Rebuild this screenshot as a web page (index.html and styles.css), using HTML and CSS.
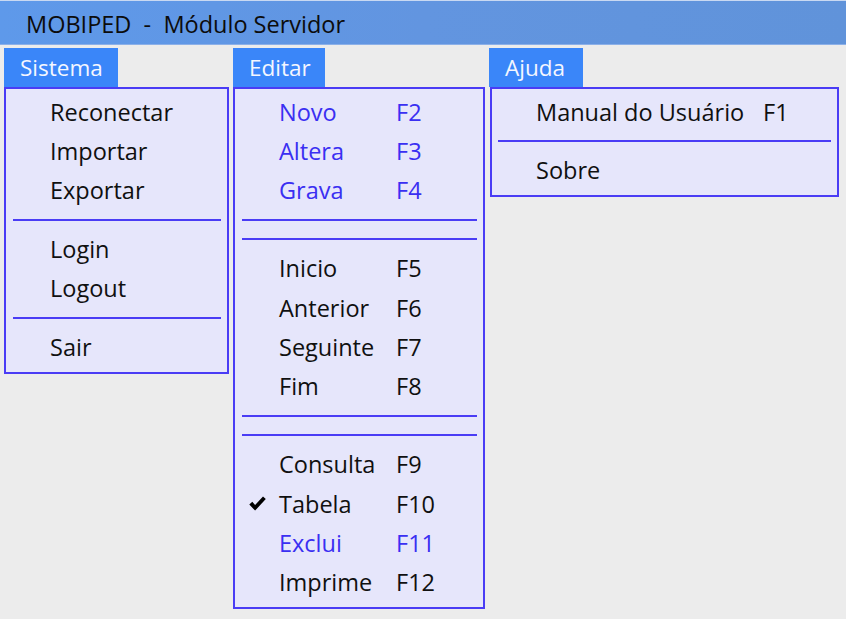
FILE: index.html
```html
<!DOCTYPE html>
<html lang="pt">
<head>
<meta charset="utf-8">
<title>MOBIPED - Módulo Servidor</title>
<link rel="stylesheet" href="styles.css">
</head>
<body>
<div class="window">
  <div class="titlebar">MOBIPED&nbsp; - &nbsp;Módulo Servidor</div>
  <div class="menus">
    <div class="col col-sistema">
      <div class="tab">Sistema</div>
      <div class="panel">
        <div class="item"><span class="chk"></span><span class="lbl">Reconectar</span></div>
        <div class="item"><span class="chk"></span><span class="lbl">Importar</span></div>
        <div class="item"><span class="chk"></span><span class="lbl">Exportar</span></div>
        <div class="sep"></div>
        <div class="item"><span class="chk"></span><span class="lbl">Login</span></div>
        <div class="item"><span class="chk"></span><span class="lbl">Logout</span></div>
        <div class="sep"></div>
        <div class="item"><span class="chk"></span><span class="lbl">Sair</span></div>
      </div>
    </div>
    <div class="col col-editar">
      <div class="tab">Editar</div>
      <div class="panel">
        <div class="item disabled"><span class="chk"></span><span class="lbl">Novo</span><span class="key">F2</span></div>
        <div class="item disabled"><span class="chk"></span><span class="lbl">Altera</span><span class="key">F3</span></div>
        <div class="item disabled"><span class="chk"></span><span class="lbl">Grava</span><span class="key">F4</span></div>
        <div class="sep"></div>
        <div class="sep"></div>
        <div class="item"><span class="chk"></span><span class="lbl">Inicio</span><span class="key">F5</span></div>
        <div class="item"><span class="chk"></span><span class="lbl">Anterior</span><span class="key">F6</span></div>
        <div class="item"><span class="chk"></span><span class="lbl">Seguinte</span><span class="key">F7</span></div>
        <div class="item"><span class="chk"></span><span class="lbl">Fim</span><span class="key">F8</span></div>
        <div class="sep"></div>
        <div class="sep"></div>
        <div class="item"><span class="chk"></span><span class="lbl">Consulta</span><span class="key">F9</span></div>
        <div class="item"><span class="chk"><svg class="check" width="17" height="16" viewBox="0 0 17 16"><path d="M0.3 8.6 L3.3 5.8 L6.1 8.9 L14 0.4 L16.8 3 L6.1 14.6 Z" fill="#000"/></svg></span><span class="lbl">Tabela</span><span class="key">F10</span></div>
        <div class="item disabled"><span class="chk"></span><span class="lbl">Exclui</span><span class="key">F11</span></div>
        <div class="item"><span class="chk"></span><span class="lbl">Imprime</span><span class="key">F12</span></div>
      </div>
    </div>
    <div class="col col-ajuda">
      <div class="tab">Ajuda</div>
      <div class="panel">
        <div class="item"><span class="chk"></span><span class="lbl">Manual do Usuário</span><span class="key">F1</span></div>
        <div class="sep sep-short"></div>
        <div class="item"><span class="chk"></span><span class="lbl">Sobre</span></div>
      </div>
    </div>
  </div>
</div>
</body>
</html>
```
FILE: styles.css
```css
html, body {
  margin: 0;
  padding: 0;
}
body {
  background: #ececec;
  font-family: "Open Sans", "Noto Sans", "DejaVu Sans", sans-serif;
  width: 846px;
  height: 619px;
  overflow: hidden;
}
.titlebar {
  height: 43px;
  border-top: 1px solid #c9d9f2;
  border-bottom: 1px solid #8cb0e8;
  background: linear-gradient(90deg, #5e99ea 0%, #6295e0 50%, #6093da 100%);
  color: #0c0c0c;
  font-size: 23.5px;
  line-height: 47px;
  padding-left: 26px;
  white-space: pre;
  overflow: hidden;
}
.menus {
  display: flex;
  padding: 3px 0 0 4px;
  gap: 4px;
  align-items: flex-start;
}
.col {
  display: flex;
  flex-direction: column;
  align-items: flex-start;
}
.col-sistema { width: 225px; }
.col-editar { width: 252px; }
.col-ajuda { width: 350px; }
.tab {
  height: 39px;
  line-height: 39px;
  background: #3a86f9;
  color: #f4f6ff;
  font-size: 22.5px;
  padding-left: 16px;
  box-sizing: border-box;
  overflow: hidden;
}
.col-sistema .tab { width: 114px; }
.col-editar .tab { width: 92px; }
.col-ajuda .tab { width: 94px; }
.panel {
  align-self: stretch;
  background: #e6e6fb;
  border: 2px solid #4a3cf5;
  padding: 3px 0 5px;
}
.col-ajuda .panel { margin-left: 1px; }
.item {
  display: grid;
  grid-template-columns: 44px 117px auto;
  align-items: center;
  height: 39.4px;
  font-size: 23.5px;
  color: #101010;
  white-space: nowrap;
}
.col-ajuda .item { grid-template-columns: 44px 227px auto; }
.item.disabled { color: #3a2ff2; }
.chk {
  display: flex;
  justify-content: center;
  align-items: center;
}
.check { display: block; margin-top: 1px; }
.sep {
  height: 19.2px;
  display: flex;
  align-items: center;
  padding: 0 6px 0 7px;
}
.sep::before {
  content: "";
  flex: 1;
  height: 2px;
  background: #4a3cf5;
}
.sep-short { height: 18.8px; padding: 0 6px; }
```
